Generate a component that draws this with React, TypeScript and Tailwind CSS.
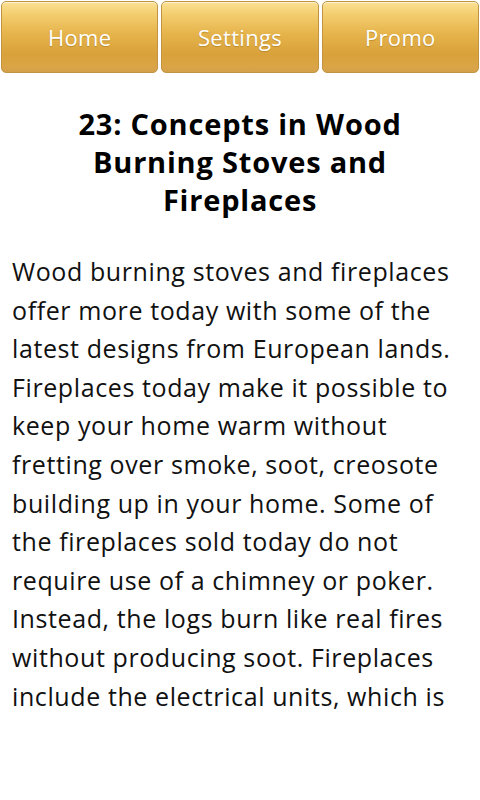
import React from "react";

const lines = [
  "Wood burning stoves and fireplaces",
  "offer more today with some of the",
  "latest designs from European lands.",
  "Fireplaces today make it possible to",
  "keep your home warm without",
  "fretting over smoke, soot, creosote",
  "building up in your home. Some of",
  "the fireplaces sold today do not",
  "require use of a chimney or poker.",
  "Instead, the logs burn like real fires",
  "without producing soot. Fireplaces",
  "include the electrical units, which is",
];

function Btn({ label }: { label: string }) {
  return (
    <div className="flex-1 h-[72px] rounded-[5px] border border-[#c09345] bg-[linear-gradient(to_bottom,#fbe294_0%,#f3cd6e_18%,#e6b44c_45%,#d9a13a_75%,#daa546_92%,#d4a04a_100%)] flex items-center justify-center shadow-[inset_0_1px_0_rgba(255,255,255,0.6)]">
      <span className="text-white text-[22px] tracking-[0.3px] leading-none [text-shadow:0_1px_1px_rgba(120,80,0,0.35)]">
        {label}
      </span>
    </div>
  );
}

export default function App() {
  return (
    <div
      className="w-[480px] h-[800px] bg-white overflow-hidden"
      style={{ fontFamily: '"Open Sans", "DejaVu Sans", sans-serif' }}
    >
      <div className="flex gap-[3px] px-[1px] pt-[1px]">
        <Btn label="Home" />
        <Btn label="Settings" />
        <Btn label="Promo" />
      </div>
      <h1 className="mt-[32px] text-center font-bold text-[29px] tracking-[0.8px] leading-[38px] text-black px-4">
        23: Concepts in Wood
        <br />
        Burning Stoves and
        <br />
        Fireplaces
      </h1>
      <div className="mt-[33px] pl-[12px] text-[25px] tracking-[0.6px] leading-[38.6px] text-[#111]">
        {lines.map((l, i) => (
          <div key={i} className="whitespace-nowrap">
            {l}
          </div>
        ))}
      </div>
    </div>
  );
}
